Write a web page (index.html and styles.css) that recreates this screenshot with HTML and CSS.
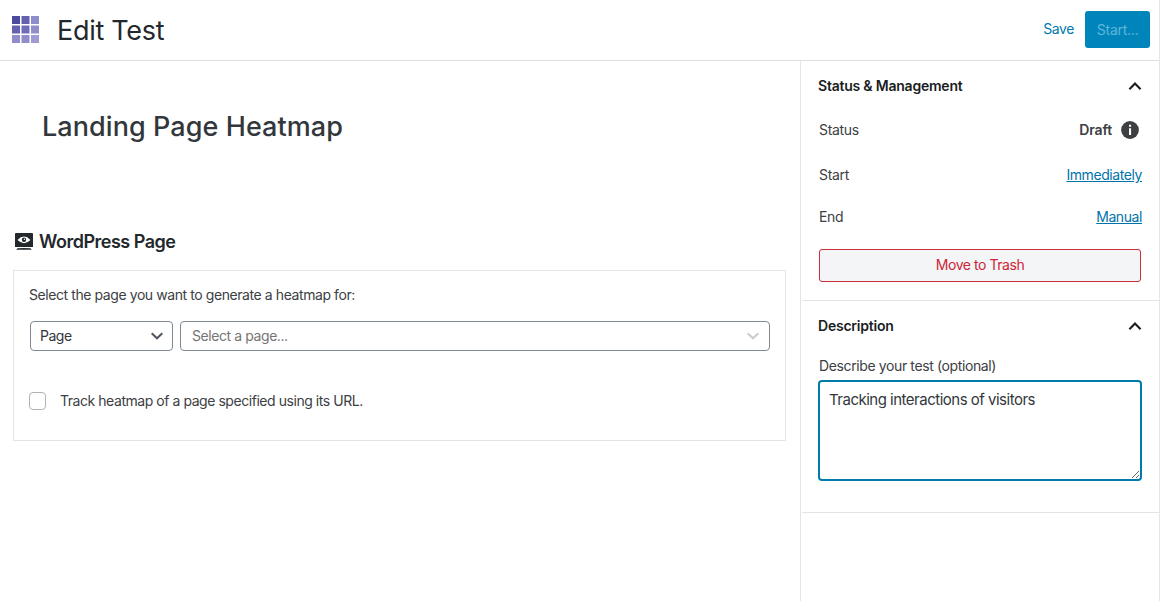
FILE: index.html
```html
<!DOCTYPE html>
<html lang="en">
<head>
<meta charset="utf-8">
<title>Edit Test</title>
<link rel="stylesheet" href="styles.css">
</head>
<body>
<div class="app">
  <header class="header">
    <svg class="logo" width="27" height="27" viewBox="0 0 27 27">
      <path fill="#4b4a9c" d="M0 0h8v8H0z"/>
      <path fill="#6462b0" d="M9.500 0h8v8h-8zM0 9.500h8v8H0z"/>
      <path fill="#8f8dca" d="M19 0h8v8h-8zM19 9.500h8v8h-8zM0 19h8v8H0z"/>
      <path fill="#6f6db8" d="M9.500 9.500h8v8h-8z"/>
      <path fill="#8f8dca" d="M9.500 19h8v8h-8z"/>
      <path fill="#9d9bd2" d="M19 19h8v8h-8z"/>
    </svg>
    <h1 class="header-title"><span>Edit Test</span></h1>
    <a class="save">Save</a>
    <button class="start" disabled>Start...</button>
  </header>
  <div class="body">
    <main class="main">
      <div class="test-name"><span>Landing Page Heatmap</span></div>
      <h2 class="section-title">
        <svg class="section-icon" width="18" height="17" viewBox="0 0 18 17">
          <path fill="#23282d" d="M1 0h16q1 0 1 1v13H0V1q0-1 1-1z"/>
          <path fill="#23282d" d="M2.500 15.300q6.500-.6 13 0l1.200 1.500H1.200z"/>
          <path fill="#fff" d="M2.500 7Q9 .2 15.500 7 9 13.300 2.500 7z"/>
          <circle cx="9" cy="6.800" r="2.200" fill="#23282d"/>
          <circle cx="9.400" cy="6.300" r=".7" fill="#fff"/>
        </svg>
        <span>WordPress Page</span>
      </h2>
      <section class="card">
        <p class="prompt"><span>Select the page you want to generate a heatmap for:</span></p>
        <div class="selects">
          <div class="select select-type"><span>Page</span>
            <svg width="14" height="8" viewBox="0 0 14 8"><path d="M1.700 1.200 7 6.300l5.300-5.100" fill="none" stroke="#50575e" stroke-width="2"/></svg>
          </div>
          <div class="select select-page"><span>Select a page...</span>
            <svg width="14" height="8" viewBox="0 0 14 8"><path d="M1.600 1.200 7 6.300l5.400-5.100" fill="none" stroke="#ccc" stroke-width="2.200"/></svg>
          </div>
        </div>
        <label class="check"><i class="box"></i><span>Track heatmap of a page specified using its URL.</span></label>
      </section>
    </main>
    <aside class="sidebar">
      <section class="panel panel-status">
        <h3 class="panel-title"><span>Status &amp; Management</span>
          <svg width="14" height="9" viewBox="0 0 14 9"><path d="M1.400 7.200 7 1.500l5.600 5.700" fill="none" stroke="#191e23" stroke-width="2.100"/></svg>
        </h3>
        <div class="row row-status"><span>Status</span>
          <div class="state"><b>Draft</b>
            <svg width="18" height="18" viewBox="0 0 18 18"><circle cx="9" cy="9" r="8.900" fill="#3c4043"/><path fill="#fff" d="M8 3.700h2.100v2.100H8zM8 7.200h2.100V14H8z"/></svg>
          </div>
        </div>
        <div class="row row-start"><span>Start</span><a class="link">Immediately</a></div>
        <div class="row row-end"><span>End</span><a class="link">Manual</a></div>
        <button class="trash">Move to Trash</button>
      </section>
      <section class="panel panel-description">
        <h3 class="panel-title"><span>Description</span>
          <svg width="14" height="9" viewBox="0 0 14 9"><path d="M1.400 7.200 7 1.500l5.600 5.700" fill="none" stroke="#191e23" stroke-width="2.100"/></svg>
        </h3>
        <label class="describe" for="description"><span>Describe your test (optional)</span></label>
        <textarea class="textarea" id="description">Tracking interactions of visitors</textarea>
      </section>
    </aside>
  </div>
</div>
</body>
</html>
```
FILE: styles.css
```css
* { box-sizing: border-box; }
body {
  margin: 0;
  background: #fff;
  color: #3c4043;
  font-family: Inter, "Liberation Sans", sans-serif;
  font-size: 14px;
  line-height: 20px;
  letter-spacing: -0.3px;
}
h1, h2, h3, p { margin: 0; }
svg { display: block; flex: none; }
.app {
  display: flex;
  flex-direction: column;
  width: 1160px;
  height: 601px;
  border-right: 1px solid #e2e4e7;
}
.header {
  display: flex;
  align-items: center;
  height: 61px;
  padding: 0 9px 2px 12px;
  border-bottom: 1px solid #dcdee0;
}
.header-title {
  flex: 1;
  margin-left: 18px;
  padding-top: 3px;
  color: #23282d;
  font-size: 27px;
  font-weight: 400;
  line-height: 34px;
}
.save { margin-right: 11px; color: #0079ad; letter-spacing: -0.4px; }
.start {
  width: 65px;
  height: 37px;
  padding: 1px 0 0;
  border: 0;
  border-radius: 3px;
  background: #0085ba;
  color: #5fb6da;
  font: inherit;
  letter-spacing: inherit;
}
.body { display: flex; flex: 1; }
.main { width: 800px; padding: 46px 14px 0 13px; }
.test-name {
  padding-left: 29px;
  color: #32373c;
  font-size: 27px;
  font-weight: 500;
  line-height: 40px;
  letter-spacing: 0.07px;
}
.section-title {
  display: flex;
  align-items: center;
  gap: 6px;
  height: 24px;
  margin-top: 82px;
  padding-left: 2px;
  color: #23282d;
  font-size: 18px;
  font-weight: 600;
  letter-spacing: -0.5px;
}
.section-title span { padding-top: 2px; }
.card {
  height: 171px;
  margin-top: 17px;
  padding: 14px 15px 0;
  border: 1px solid #e2e4e7;
  letter-spacing: -0.42px;
}
.selects { display: flex; gap: 7px; margin: 16px 0 40px 1px; }
.select {
  display: flex;
  align-items: center;
  justify-content: space-between;
  height: 30px;
  border: 1px solid #7e8993;
  border-radius: 4px;
}
.select-type { width: 143px; padding: 0 8px 0 9px; color: #32373c; letter-spacing: -0.5px; }
.select-page { width: 590px; padding: 0 9px 0 11px; color: #757575; }
.check { display: flex; align-items: center; gap: 14px; letter-spacing: -0.45px; }
.box {
  width: 17px;
  height: 18px;
  border: 1px solid #b0b3b6;
  border-radius: 4px;
}
.sidebar { flex: 1; border-left: 1px solid #e2e4e7; padding-left: 1px; }
.panel { padding: 15px 18px 0 17px; border-bottom: 1px solid #e2e4e7; }
.panel-status { height: 240px; }
.panel-description { height: 212px; }
.panel-title {
  display: flex;
  align-items: center;
  justify-content: space-between;
  margin-left: -1px;
  color: #191e23;
  font-size: 14px;
  font-weight: 600;
  line-height: 20px;
  letter-spacing: -0.22px;
}
.row { display: flex; align-items: center; justify-content: space-between; height: 20px; }
.row-status { margin-top: 24px; padding-right: 3px; }
.row-start { margin-top: 25px; }
.row-end { margin-top: 22px; }
.state { display: flex; align-items: center; gap: 9px; }
.state b { font-weight: 600; letter-spacing: -0.15px; }
.link {
  color: #0073aa;
  letter-spacing: -0.42px;
  text-decoration: underline;
}
.trash {
  display: block;
  width: 322px;
  height: 33px;
  margin-top: 22px;
  padding: 0 0 1px;
  border: 1px solid #c9303c;
  border-radius: 3px;
  background: #f3f5f6;
  color: #cf2437;
  font: inherit;
  letter-spacing: -0.45px;
}
.describe { display: block; margin-top: 20px; letter-spacing: -0.38px; }
.textarea {
  display: block;
  width: 324px;
  height: 101px;
  margin: 4px 0 0 -1px;
  padding: 8px 9px;
  border: 2px solid #007cac;
  border-radius: 4px;
  outline: 0;
  color: #32373c;
  font: 15px/20px Inter, "Liberation Sans", sans-serif;
  letter-spacing: -0.5px;
}
```
